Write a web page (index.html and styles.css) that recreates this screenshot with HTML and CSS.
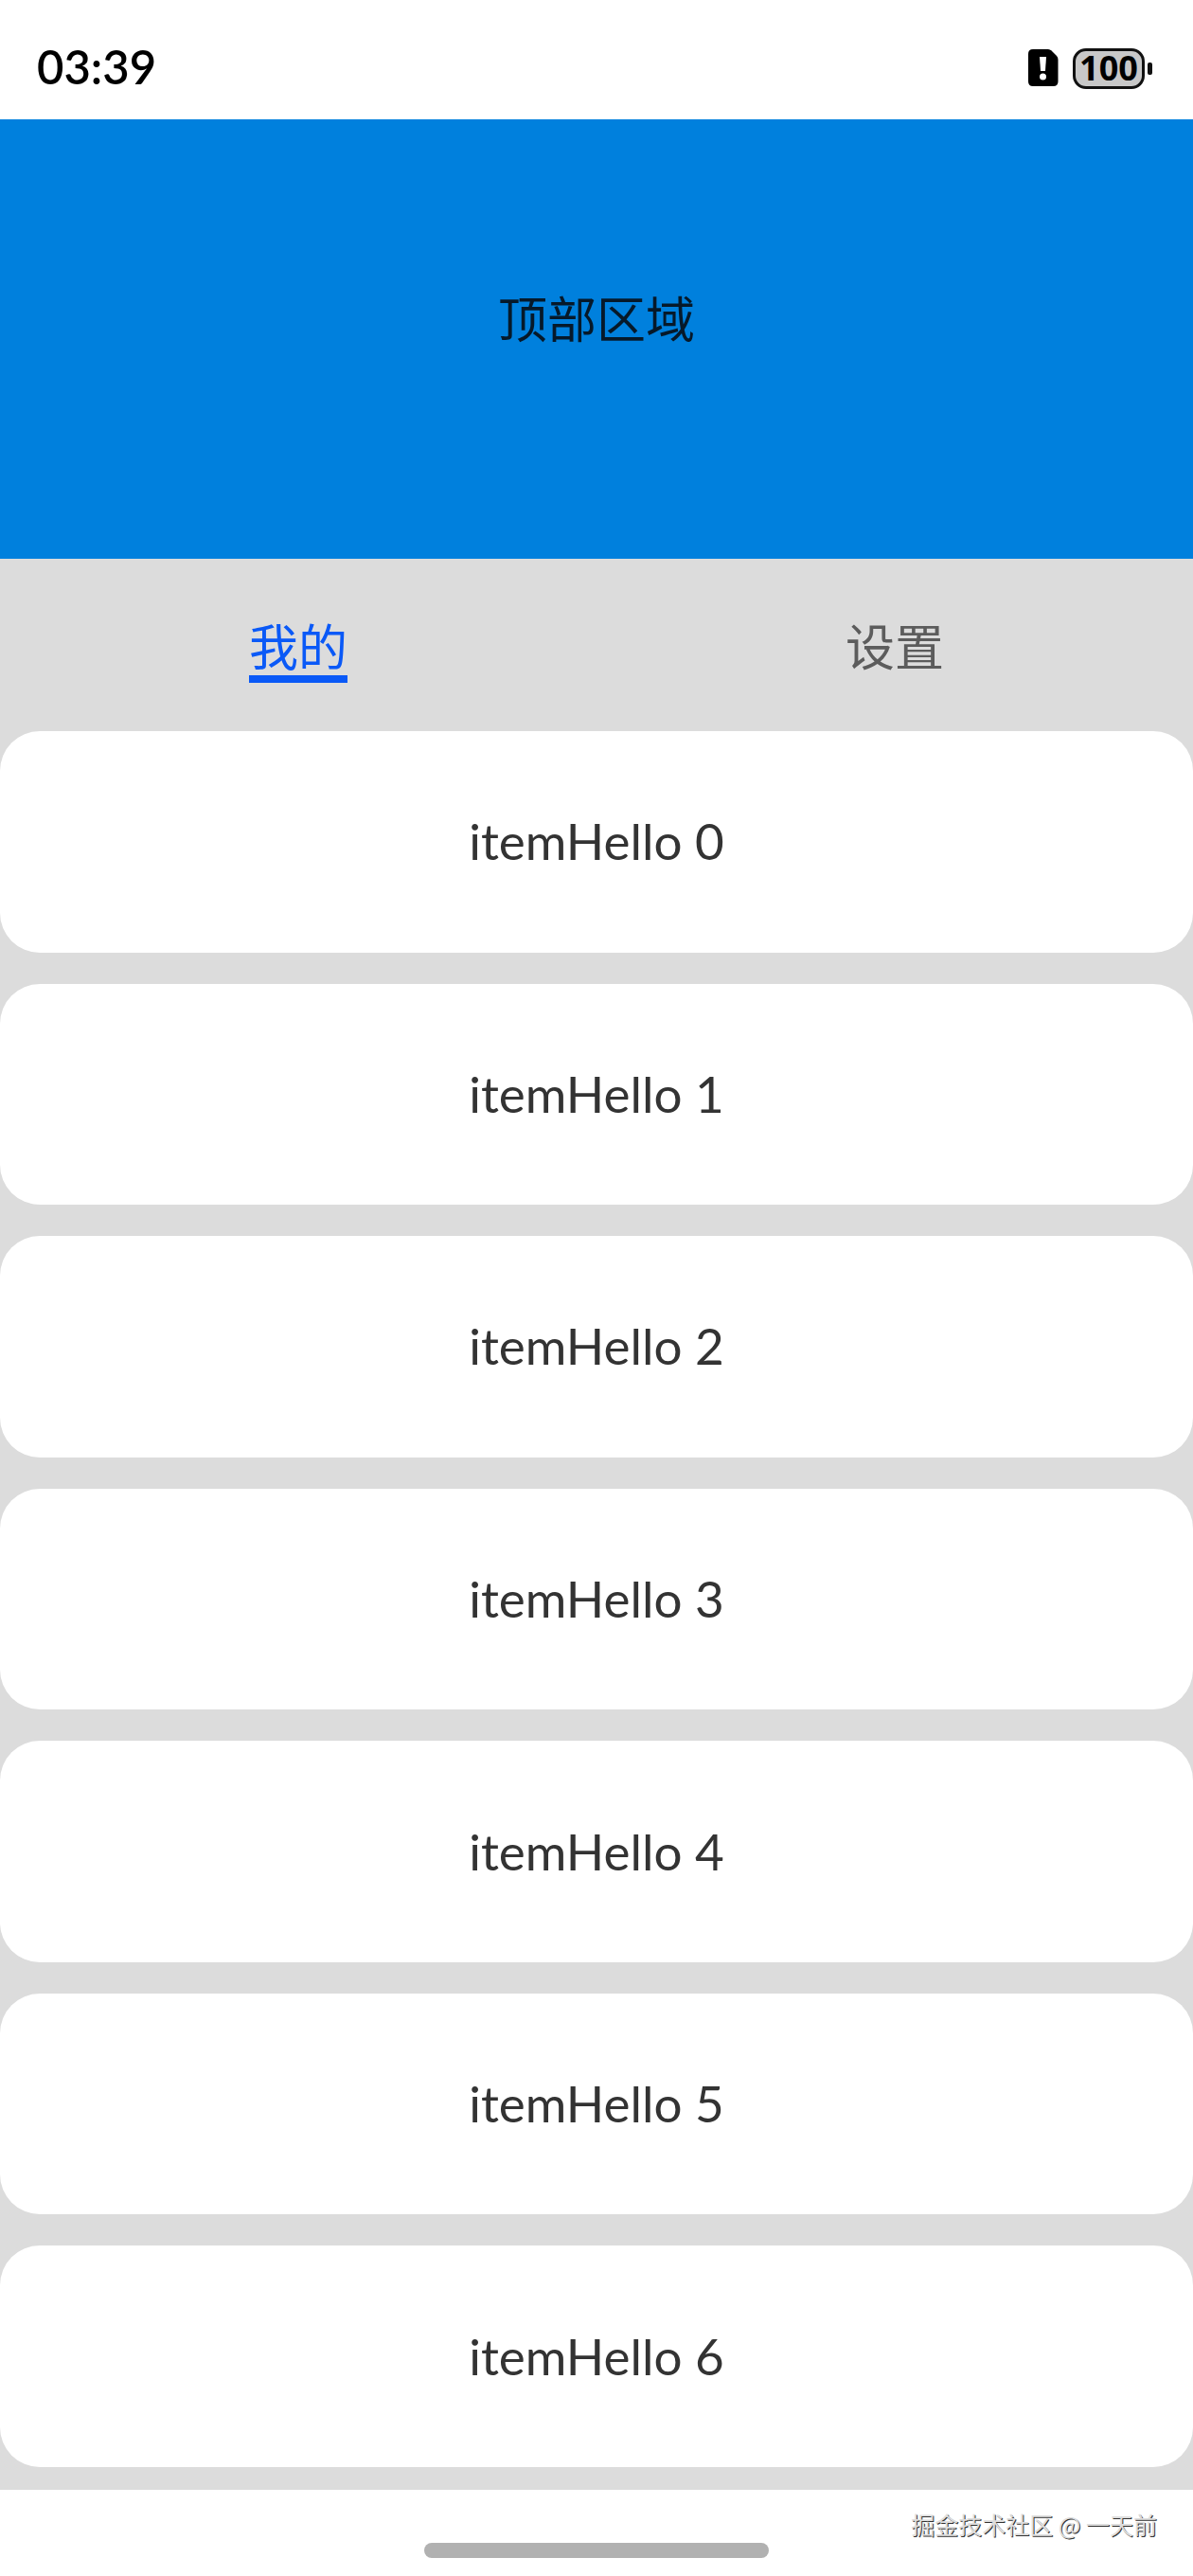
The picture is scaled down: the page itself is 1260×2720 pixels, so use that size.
FILE: index.html
```html
<!DOCTYPE html>
<html lang="zh-CN">

<head>
  <meta charset="UTF-8">
  <meta name="viewport" content="width=device-width, initial-scale=1.0">
  <title>顶部区域</title>
  <link rel="stylesheet" href="styles.css">
</head>

<body>
  <div class="status-bar">
    <span class="time">03:39</span>
    <div class="status-icons">
      <svg class="sim" width="32" height="40" viewBox="0 0 32 40">
        <path d="M5 0H21Q23 0 24.5 1.5L30 7Q31.5 8.500 31.5 11V34Q31.5 39 26.5 39H5Q0 39 0 34V5Q0 0 5 0Z" fill="#000" />
        <path d="M12 8H19L18 23H13Z" fill="#fff" />
        <circle cx="15.5" cy="29" r="3.5" fill="#fff" />
      </svg>
      <div class="battery">
        <span class="level">100</span>
      </div>
      <span class="battery-tip"></span>
    </div>
  </div>

  <header class="top-area">顶部区域</header>

  <main>
    <nav class="tabs">
      <button class="tab active">我的</button>
      <button class="tab">设置</button>
    </nav>

    <ul class="list">
      <li class="item">itemHello 0</li>
      <li class="item">itemHello 1</li>
      <li class="item">itemHello 2</li>
      <li class="item">itemHello 3</li>
      <li class="item">itemHello 4</li>
      <li class="item">itemHello 5</li>
      <li class="item">itemHello 6</li>
    </ul>
  </main>

  <footer class="bottom-bar">
    <span class="home-line"></span>
    <span class="watermark">掘金技术社区 @ 一天前</span>
  </footer>
</body>

</html>
```
FILE: styles.css
```css
* {
  box-sizing: border-box;
}

body {
  display: flex;
  flex-direction: column;
  min-height: 100vh;
  margin: 0;
  background-color: #fff;
  font-family: Lato, "Noto Sans CJK SC", sans-serif;
  font-size: 52px;
}

.status-bar {
  display: flex;
  align-items: center;
  justify-content: space-between;
  height: 126px;
  padding: 18px 43px 0 39px;
}

.time {
  padding-bottom: 4px;
  font-size: 49px;
  font-weight: 600;
  color: #000;
}

.status-icons {
  display: flex;
  align-items: center;
}

.sim {
  margin-right: 15px;
}

.battery {
  display: flex;
  align-items: center;
  justify-content: center;
  width: 76px;
  height: 43px;
  border: 3px solid #111;
  border-radius: 14px;
  background-color: #c8c8c8;
}

.level {
  font-family: "Noto Sans", sans-serif;
  font-size: 36px;
  font-weight: 700;
  line-height: 36px;
  color: #000;
}

.battery-tip {
  width: 5px;
  height: 13px;
  margin-left: 3px;
  border-radius: 2px;
  background-color: #111;
}

.top-area {
  display: flex;
  align-items: center;
  justify-content: center;
  height: 464px;
  padding-bottom: 48px;
  background-color: #0080dd;
  color: #06192a;
}

main {
  display: flex;
  flex: 1;
  flex-direction: column;
  background-color: #dcdcdc;
}

.tabs {
  display: flex;
  align-items: center;
  justify-content: space-around;
  height: 182px;
  padding-top: 12px;
}

.tab {
  padding: 0;
  border: 0;
  border-bottom: 8px solid transparent;
  background: none;
  font-family: inherit;
  font-size: 52px;
  line-height: 60px;
  color: #5c5c5c;
  cursor: pointer;
}

.tab.active {
  border-bottom-color: #0a59f7;
  color: #0a59f7;
}

.list {
  display: flex;
  flex: 1;
  flex-direction: column;
  gap: 33px;
  margin: 0;
  padding: 0 0 24px;
  list-style: none;
}

.item {
  display: flex;
  flex: 1;
  align-items: center;
  justify-content: center;
  min-height: 180px;
  padding-bottom: 2px;
  border-radius: 42px;
  background-color: #fff;
  font-size: 53px;
  color: #333;
}

.bottom-bar {
  display: grid;
  grid-template-columns: 1fr auto 1fr;
  height: 91px;
  padding-right: 38px;
  padding-left: 38px;
}

.home-line {
  grid-column: 2;
  align-self: end;
  width: 364px;
  height: 16px;
  margin-bottom: 19px;
  border-radius: 8px;
  background-color: #b1b1b1;
}

.watermark {
  justify-self: end;
  padding-top: 18px;
  font-family: "Noto Sans CJK SC", sans-serif;
  font-size: 25px;
  line-height: 36px;
  color: #ddd;
  text-shadow: 1px 1px 0 #333;
  white-space: nowrap;
}
```
